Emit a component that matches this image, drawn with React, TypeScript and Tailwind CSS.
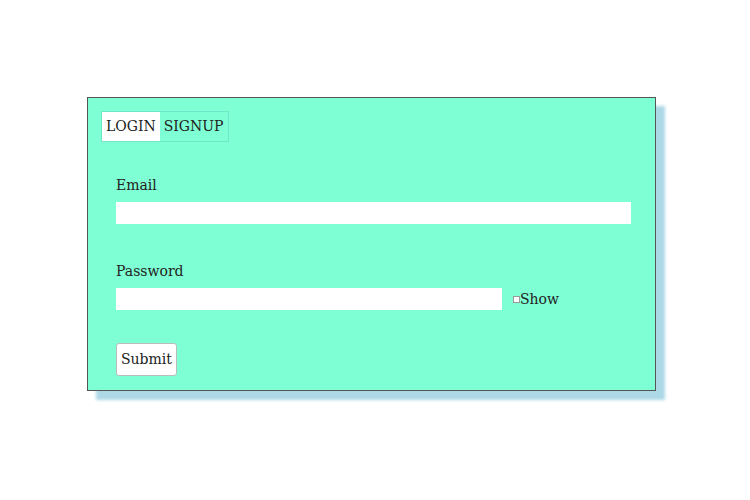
import { useState } from "react";

const App = () => {
    const [tab, setTab] = useState<"login" | "signup">("login");
    const [show, setShow] = useState(false);

    return (
        <div className="w-[750px] h-[500px] bg-white pt-[97px] pl-[87px]" style={{ fontFamily: '"DejaVu Serif", serif' }}>
            <div className="w-[569px] h-[294px] bg-[#7fffd4] border border-[#555] shadow-[9px_9px_3px_#add8e6] pt-[13px] pl-[13px] pr-[14px] text-[14px] text-[#222]">
                <div className="inline-flex border border-[#6ee8c6]">
                    <button
                        onClick={() => setTab("login")}
                        className={`h-[29px] px-[4px] ${tab === "login" ? "bg-white" : "bg-[#7fffd4]"}`}
                    >
                        LOGIN
                    </button>
                    <button
                        onClick={() => setTab("signup")}
                        className={`h-[29px] px-[4px] ${tab === "signup" ? "bg-white" : "bg-[#7fffd4]"}`}
                    >
                        SIGNUP
                    </button>
                </div>

                <form className="pl-[15px] pr-[10px] pt-[33px]" onSubmit={(e) => e.preventDefault()}>
                    <label className="block leading-[20px]">Email</label>
                    <input type="email" className="block w-full h-[22px] mt-[7px] bg-white outline-none" />

                    <label className="block leading-[20px] mt-[37px]">Password</label>
                    <div className="flex items-center mt-[7px]">
                        <input type={show ? "text" : "password"} className="w-[386px] h-[22px] bg-white outline-none" />
                        <input
                            type="checkbox"
                            checked={show}
                            onChange={() => setShow(!show)}
                            className="w-[7px] h-[7px] ml-[11px] appearance-none bg-white border border-[#999]"
                        />
                        <span>Show</span>
                    </div>

                    <button className="mt-[33px] h-[33px] px-[4px] bg-white border border-[#bbb] rounded-[3px]">
                        Submit
                    </button>
                </form>
            </div>
        </div>
    );
};

export default App;
